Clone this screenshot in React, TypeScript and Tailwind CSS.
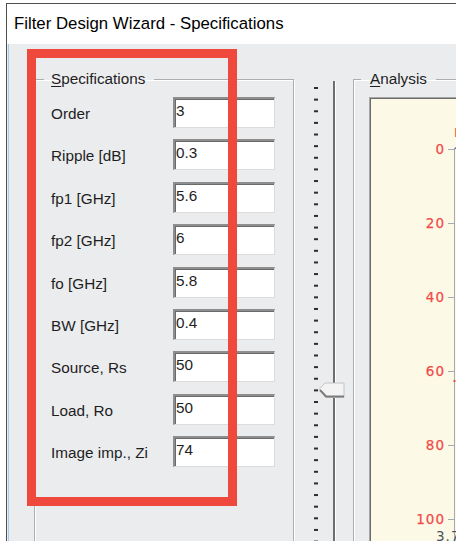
import React from "react";

const specs: [string, string][] = [
  ["Order", "3"],
  ["Ripple [dB]", "0.3"],
  ["fp1 [GHz]", "5.6"],
  ["fp2 [GHz]", "6"],
  ["fo [GHz]", "5.8"],
  ["BW [GHz]", "0.4"],
  ["Source, Rs", "50"],
  ["Load, Ro", "50"],
  ["Image imp., Zi", "74"],
];

function SpecRow({ label, value }: { label: string; value: string }) {
  return (
    <div className="flex items-center h-[31px]">
      <div className="w-[122px] whitespace-nowrap mt-[4px]">{label}</div>
      <div className="w-[102px] h-[31px] bg-white border-t-2 border-l-2 border-[#8e8e8e] border-r border-b border-r-[#dcdcdc] border-b-[#dcdcdc] pl-[1px] pt-[3px] leading-[18px] shadow-[inset_1px_1px_0_#6a6a6a]">
        {value}
      </div>
    </div>
  );
}

// Vertical trackbar: tick column, groove and pointer thumb
function Trackbar() {
  const ticks = Array.from({ length: 41 }, (_, i) => 18 + i * 11.63);
  return (
    <svg width="58" height="480" className="block shrink-0">
      {ticks.map((y, i) => (
        <rect key={i} x="19" y={y - 1} width="4" height="2" fill="#2e2e2e" />
      ))}
      <rect x="38" y="11" width="2" height="470" fill="#6e6e6e" />
      <rect x="40" y="11" width="1" height="470" fill="#ffffff" />
      <polygon
        points="24,319.5 30,313 49,313 49,327.5 31,327.5"
        fill="#f3f3f3"
        stroke="#c4c4c4"
        strokeWidth="1"
      />
      <polyline points="25,320 31,326.5 49,326.5" fill="none" stroke="#7c7c7c" strokeWidth="2" />
    </svg>
  );
}

// Y axis of the attenuation plot
function PlotAxis() {
  const labels = ["0", "20", "40", "60", "80", "100"];
  return (
    <svg width="100" height="450" className="block">
      <text x="83" y="38" fill="#f04848" fontFamily="DejaVu Sans" fontSize="13">
        I
      </text>
      <line x1="83.5" y1="50" x2="83.5" y2="450" stroke="#a4aab4" strokeWidth="1" />
      <line x1="83.5" y1="50" x2="86" y2="48" stroke="#4a5fb0" strokeWidth="1.2" />
      {labels.map((t, i) => {
        const y = 50 + i * 74;
        return (
          <g key={t}>
            <line x1="77" y1={y + 0.5} x2="83" y2={y + 0.5} stroke="#a4aab4" strokeWidth="1" />
            <text
              x="74"
              y={y + 5}
              textAnchor="end"
              fill="#f24a4a"
              fontFamily="DejaVu Sans"
              fontSize="13.5"
              letterSpacing="1"
              stroke="#f24a4a"
              strokeWidth="0.25"
            >
              {t}
            </text>
          </g>
        );
      })}
      <rect x="82.5" y="281" width="2" height="2" fill="#f04848" />
      <text x="65" y="442" fill="#4b5263" fontFamily="DejaVu Sans" fontSize="13.5" letterSpacing="1">
        3.7
      </text>
    </svg>
  );
}

export default function App() {
  return (
    <div className="w-[456px] h-[541px] bg-white overflow-hidden relative font-['Liberation_Sans',Arial,sans-serif] text-[#1e1e1e]">
      <div className="ml-[6px] mt-[3px] h-[538px] w-[470px] border-l border-t border-[#4f4f4f] flex flex-col">
        <div className="h-[40px] shrink-0 bg-white pl-[7px] flex items-center text-[16.8px] text-black whitespace-nowrap">
          Filter Design Wizard - Specifications
        </div>
        <div className="flex-1 bg-[#ebecee] shadow-[inset_1px_0_0_#ebecee,inset_2px_0_0_#a3cdf0] flex items-start pt-[26px] pl-[27px] text-[15.3px] overflow-hidden">
          <fieldset className="w-[260px] h-[500px] shrink-0 border border-[#aeaeae] shadow-[1px_1px_0_#fff,inset_1px_1px_0_#fff]">
            <legend className="ml-[9px] pl-[7px] pr-[9px] leading-[18px]">
              <span className="underline underline-offset-2">S</span>pecifications
            </legend>
            <div className="pt-[9px] pl-[16px] flex flex-col gap-[11.375px]">
              {specs.map(([l, v]) => (
                <SpecRow key={l} label={l} value={v} />
              ))}
            </div>
          </fieldset>
          <div className="ml-[1px]">
            <Trackbar />
          </div>
          <fieldset className="w-[200px] h-[500px] shrink-0 border border-[#aeaeae] shadow-[inset_1px_1px_0_#fff]">
            <legend className="ml-[7px] pl-[9px] pr-[9px] leading-[18px]">
              <span className="underline underline-offset-2">A</span>nalysis
            </legend>
            <div className="pt-[9px] pl-[15px]">
              <div className="w-[180px] h-[460px] bg-[#fcfae6] border-t border-l border-[#a6a6a6] shadow-[inset_1px_1px_0_#6c6c6c] pl-[1px] pt-[1px]">
                <PlotAxis />
              </div>
            </div>
          </fieldset>
        </div>
      </div>
      <div className="absolute left-[27px] top-[49px] w-[210px] h-[457px] border-[9px] border-[#ef493e]" />
    </div>
  );
}
